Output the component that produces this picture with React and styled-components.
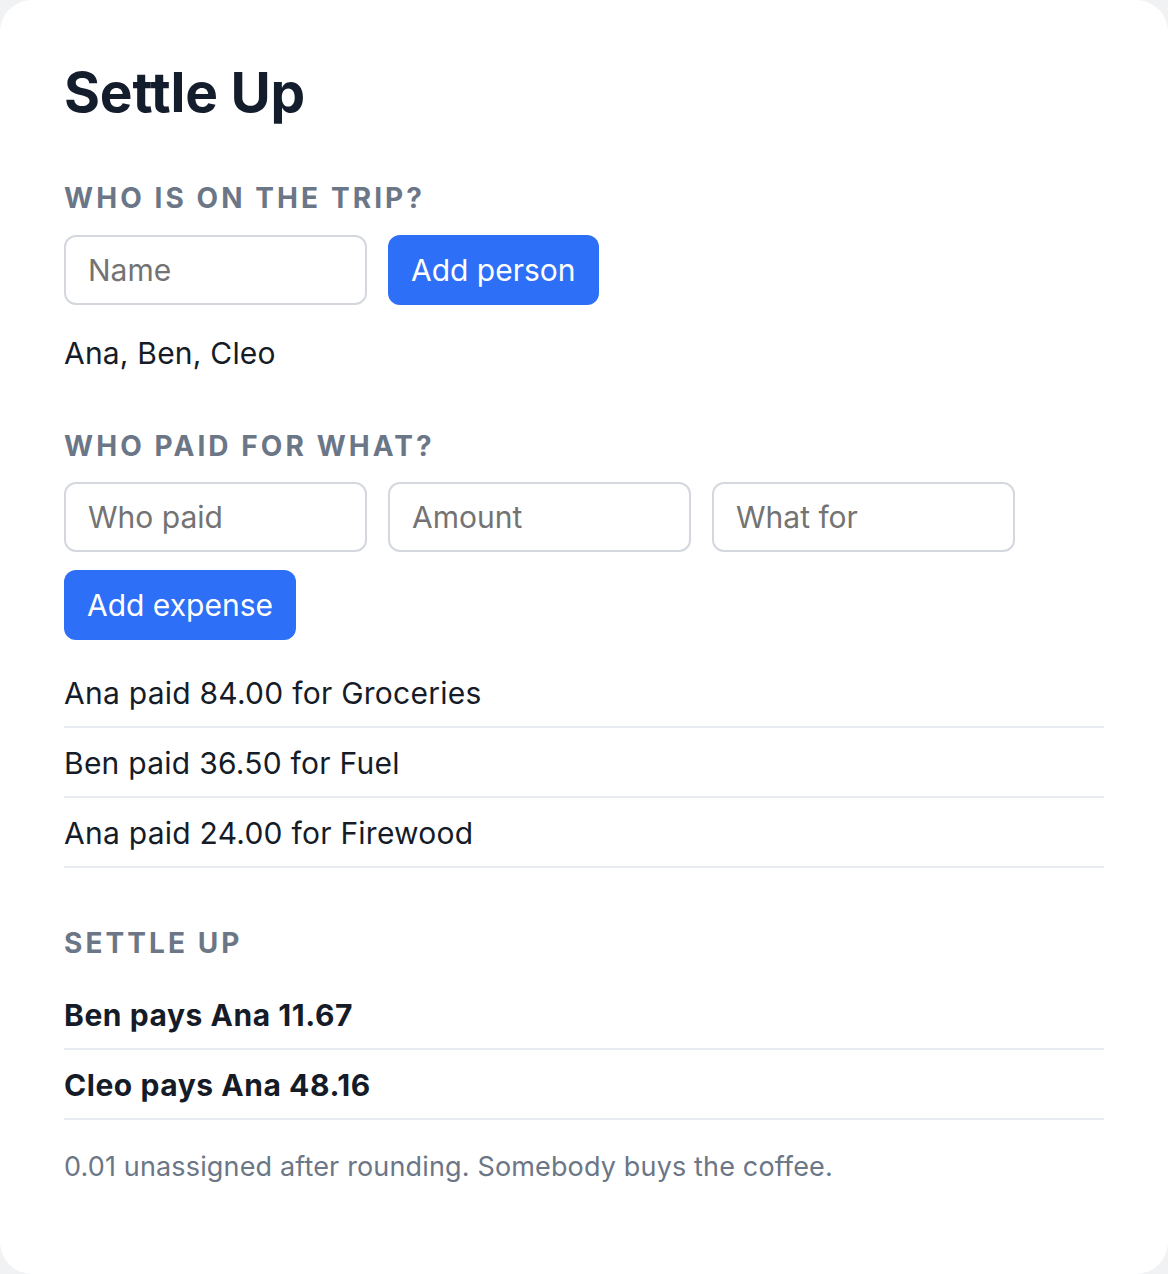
import React, { useState } from "react";
import styled, { createGlobalStyle } from "styled-components";

const GlobalStyle = createGlobalStyle`
  html, body {
    margin: 0;
    padding: 0;
    background: #f1f2f4;
  }
  * {
    box-sizing: border-box;
  }
`;

const expenses = [
  { who: "Ana", amount: "84.00", what: "Groceries" },
  { who: "Ben", amount: "36.50", what: "Fuel" },
  { who: "Ana", amount: "24.00", what: "Firewood" },
];

const settlements = [
  { from: "Ben", to: "Ana", amount: "11.67" },
  { from: "Cleo", to: "Ana", amount: "48.16" },
];

export const App = () => {
  const [name, setName] = useState("");
  const [payer, setPayer] = useState("");
  const [amount, setAmount] = useState("");
  const [what, setWhat] = useState("");

  return (
    <>
      <GlobalStyle />
      <Card>
        <Title>Settle Up</Title>

        <Label>Who is on the trip?</Label>
        <Row>
          <Input
            type="text"
            placeholder="Name"
            value={name}
            onChange={(event) => setName(event.target.value)}
          />
          <Button>Add person</Button>
        </Row>
        <People>Ana, Ben, Cleo</People>

        <Label>Who paid for what?</Label>
        <Row>
          <Input
            type="text"
            placeholder="Who paid"
            value={payer}
            onChange={(event) => setPayer(event.target.value)}
          />
          <Input
            type="text"
            placeholder="Amount"
            value={amount}
            onChange={(event) => setAmount(event.target.value)}
          />
          <Input
            type="text"
            placeholder="What for"
            value={what}
            onChange={(event) => setWhat(event.target.value)}
          />
          <Button>Add expense</Button>
        </Row>
        <List>
          {expenses.map((e, i) => (
            <Item key={i}>
              {e.who} paid {e.amount} for {e.what}
            </Item>
          ))}
        </List>

        <Label>Settle up</Label>
        <List>
          {settlements.map((s, i) => (
            <Item key={i} $bold>
              {s.from} pays {s.to} {s.amount}
            </Item>
          ))}
        </List>
        <Note>0.01 unassigned after rounding. Somebody buys the coffee.</Note>
      </Card>
    </>
  );
};

export default App;

const Card = styled.div`
  background: #ffffff;
  border-radius: 32px;
  min-height: 1274px;
  padding: 59px 64px 64px;
  font-family: Inter, "Noto Sans", sans-serif;
  color: #151c28;
`;
const Title = styled.h1`
  margin: 0;
  font-size: 55px;
  line-height: 67px;
  font-weight: 700;
  letter-spacing: -0.2px;
  color: #141d2b;
`;
const Label = styled.h2`
  margin: 56px 0 19px;
  font-size: 28px;
  line-height: 1.2;
  font-weight: 700;
  letter-spacing: 0.11em;
  text-transform: uppercase;
  color: #6b7686;
`;
const Row = styled.div`
  display: flex;
  flex-wrap: wrap;
  gap: 18px 21px;
  max-width: 1000px;
`;
const Input = styled.input`
  width: 303px;
  height: 70px;
  padding: 0 22px;
  border: 2px solid #d4d8de;
  border-radius: 12px;
  font-family: inherit;
  font-size: 30px;
  color: #151c28;
  background: #fff;
  outline: none;
  &::placeholder {
    color: #737373;
  }
`;
const Button = styled.button`
  height: 70px;
  padding: 0 23px;
  border: none;
  border-radius: 12px;
  background: #2d6ff6;
  color: #ffffff;
  font-family: inherit;
  font-size: 30px;
  cursor: pointer;
`;
const People = styled.p`
  margin: 27px 0 0;
  font-size: 30px;
  line-height: 42px;
  letter-spacing: 0.2px;
`;
const List = styled.ul`
  list-style: none;
  margin: 18px 0 0;
  padding: 0 0 3px;
`;
const Item = styled.li`
  padding: 14px 0 12px;
  border-bottom: 2px solid #e8ebef;
  font-size: 30px;
  line-height: 42px;
  font-weight: ${(p) => (p.$bold ? 700 : 400)};
  letter-spacing: ${(p) => (p.$bold ? "0.55px" : "0.25px")};
`;
const Note = styled.p`
  margin: 24px 0 0;
  font-size: 27px;
  line-height: 40px;
  letter-spacing: 0.15px;
  color: #6b7686;
`;
